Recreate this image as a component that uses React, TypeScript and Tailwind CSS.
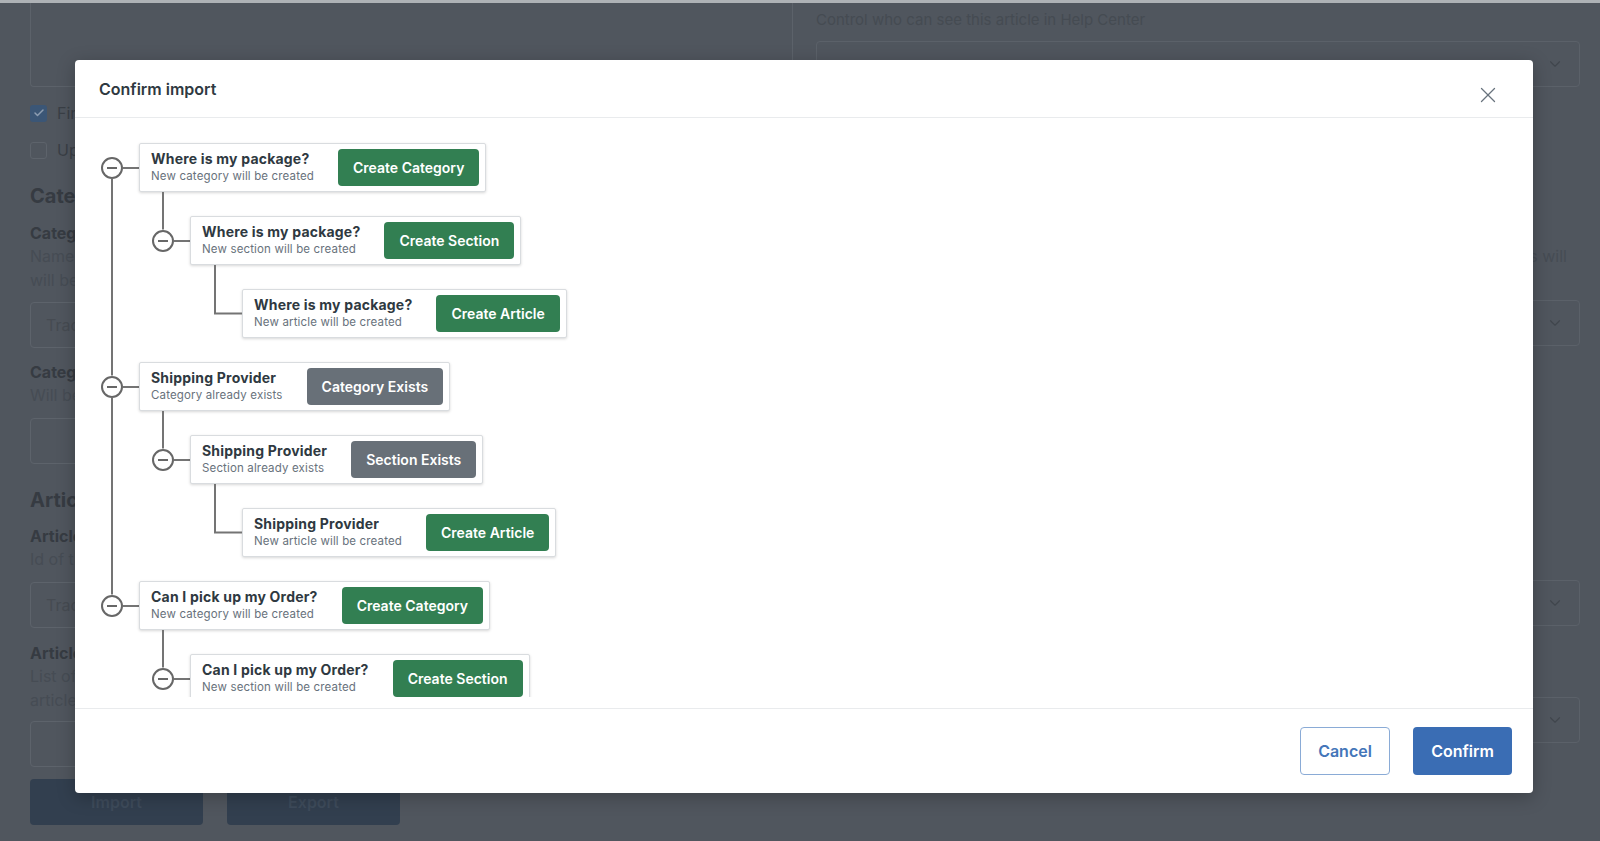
import React from 'react';
import { X, ChevronDown, Check } from 'lucide-react';

type TreeNode = {
  title: string;
  sub: string;
  action: string;
  kind: 'create' | 'exists';
  level: 0 | 1 | 2;
};

const nodes: TreeNode[] = [
  { title: 'Where is my package?', sub: 'New category will be created', action: 'Create Category', kind: 'create', level: 0 },
  { title: 'Where is my package?', sub: 'New section will be created', action: 'Create Section', kind: 'create', level: 1 },
  { title: 'Where is my package?', sub: 'New article will be created', action: 'Create Article', kind: 'create', level: 2 },
  { title: 'Shipping Provider', sub: 'Category already exists', action: 'Category Exists', kind: 'exists', level: 0 },
  { title: 'Shipping Provider', sub: 'Section already exists', action: 'Section Exists', kind: 'exists', level: 1 },
  { title: 'Shipping Provider', sub: 'New article will be created', action: 'Create Article', kind: 'create', level: 2 },
  { title: 'Can I pick up my Order?', sub: 'New category will be created', action: 'Create Category', kind: 'create', level: 0 },
  { title: 'Can I pick up my Order?', sub: 'New section will be created', action: 'Create Section', kind: 'create', level: 1 },
];

const indent = ['ml-0', 'ml-[51px]', 'ml-[103px]'];

const ROW = 73;
const cy = (i: number) => ROW * i + 24.5;
const by = (i: number) => ROW * i + 49;

function TreeLines() {
  const d = [
    `M11 ${cy(0) + 11} V${cy(3) - 11}`,
    `M11 ${cy(3) + 11} V${cy(6) - 11}`,
    `M62 ${by(0)} V${cy(1) - 11}`,
    `M114 ${by(1)} V${cy(2)} H141`,
    `M62 ${by(3)} V${cy(4) - 11}`,
    `M114 ${by(4)} V${cy(5)} H141`,
    `M62 ${by(6)} V${cy(7) - 11}`,
  ];
  return (
    <svg className="absolute left-[26px] top-0 pointer-events-none" width="200" height="600" viewBox="0 0 200 600" fill="none">
      {d.map((p, i) => (
        <path key={i} d={p} stroke="#747474" strokeWidth="2" />
      ))}
    </svg>
  );
}

function Row({ n }: { n: TreeNode }) {
  return (
    <div className={`flex items-center h-[49px] ${indent[n.level]}`}>
      {n.level < 2 ? (
        <>
          <span className="w-[22px] h-[22px] rounded-full border-2 border-[#676767] bg-white flex items-center justify-center shrink-0">
            <span className="w-[10px] h-[2px] bg-[#676767]" />
          </span>
          <span className="w-4 h-[2px] bg-[#747474] shrink-0" />
        </>
      ) : (
        <span className="w-[38px] shrink-0" />
      )}
      <div className="flex items-center gap-6 h-[49px] border border-[#d9dcdf] rounded-[2px] bg-white shadow-[0_1px_3px_rgba(0,0,0,0.16)] pl-[11px] pr-[6px] shrink-0">
        <div className="flex flex-col whitespace-nowrap -mt-[1px]">
          <span className="text-[14px] font-bold text-[#2f3941] leading-[18px] tracking-[0.2px]">{n.title}</span>
          <span className="text-[11.5px] text-[#68727c] leading-[17px] tracking-[0.15px]">{n.sub}</span>
        </div>
        <span
          className={`h-[37px] px-[15px] rounded-[4px] flex items-center text-white text-[14px] font-semibold whitespace-nowrap ${
            n.kind === 'create' ? 'bg-[#327f52]' : 'bg-[#687078]'
          }`}
        >
          {n.action}
        </span>
      </div>
    </div>
  );
}

function Modal() {
  return (
    <div className="absolute left-[75px] top-[60px] w-[1458px] h-[733px] bg-white rounded-[4px] shadow-[0_4px_18px_rgba(0,0,0,0.25)] flex flex-col overflow-hidden">
      <div className="h-[58px] shrink-0 flex items-center justify-between pl-6 pr-[32px] border-b border-[#e9ebed]">
        <h2 className="text-[16px] font-semibold text-[#2f3941]">Confirm import</h2>
        <X size={26} strokeWidth={1.2} className="text-[#68737d] mt-[12px]" />
      </div>
      <div className="h-[590px] shrink-0 flex flex-col">
        <div className="h-[579px] overflow-hidden pt-[25px]">
          <div className="relative pl-[26px] flex flex-col gap-6">
            <TreeLines />
            {nodes.map((n, i) => (
              <Row key={i} n={n} />
            ))}
          </div>
        </div>
      </div>
      <div className="flex-1 border-t border-[#e9ebed] flex items-center justify-end gap-[23px] pr-[21px]">
        <button className="w-[90px] h-[48px] border-[1.5px] border-[#8aabd6] rounded-[4px] text-[#4476b9] text-[16px] font-semibold bg-white">
          Cancel
        </button>
        <button className="w-[99px] h-[48px] bg-[#3a6db4] rounded-[4px] text-white text-[16px] font-semibold">
          Confirm
        </button>
      </div>
    </div>
  );
}

function Label({ children, cls = '' }: { children: React.ReactNode; cls?: string }) {
  return <div className={`text-[16px] font-bold text-[#363b42] leading-[22px] whitespace-nowrap ${cls}`}>{children}</div>;
}
function Desc({ children, cls = '' }: { children: React.ReactNode; cls?: string }) {
  return <div className={`text-[16px] text-[#464c54] leading-[24px] whitespace-nowrap ${cls}`}>{children}</div>;
}
function Input({ text, cls = '' }: { text?: string; cls?: string }) {
  return (
    <div className={`h-[46px] border border-[#5d636b] rounded-[4px] flex items-center pl-[15px] text-[16px] text-[#464b52] ${cls}`}>
      {text}
    </div>
  );
}
function Select({ cls = '' }: { cls?: string }) {
  return (
    <div className={`h-[46px] border border-[#5b6169] rounded-[4px] flex items-center justify-end pr-[15px] ${cls}`}>
      <ChevronDown size={18} strokeWidth={1.5} className="text-[#40464d]" />
    </div>
  );
}

function LeftCol() {
  return (
    <div className="flex flex-col">
      <div className="h-[84px] border border-t-0 border-[#5c626a] rounded-b-[4px]" />
      <div className="mt-[17px] flex items-center gap-[10px] h-[18px]">
        <span className="w-[17px] h-[17px] rounded-[3px] bg-[#3b5676] flex items-center justify-center">
          <Check size={12} strokeWidth={3} className="text-[#8d9db1]" />
        </span>
        <span className="text-[16px] text-[#3a3f46]">First row is a header</span>
      </div>
      <div className="mt-[19px] flex items-center gap-[10px] h-[18px]">
        <span className="w-[17px] h-[17px] rounded-[3px] border border-[#5d636b]" />
        <span className="text-[16px] text-[#3a3f46]">Update existing articles</span>
      </div>
      <div className="mt-[25px] text-[20px] font-bold leading-[24px] text-[#363b42]">Categories</div>
      <Label cls="mt-[14px]">Category name column</Label>
      <Desc>Name of the column that holds the category title. If no category</Desc>
      <Desc>will be found, a new one is created.</Desc>
      <Input text="Tracking" cls="mt-[10px]" />
      <Label cls="mt-[13px]">Category description column</Label>
      <Desc>Will be used as the description of the category.</Desc>
      <Input cls="mt-[11px]" />
      <div className="mt-[24px] text-[20px] font-bold leading-[24px] text-[#363b42]">Articles</div>
      <Label cls="mt-[13px]">Article id column</Label>
      <Desc>Id of the article that will be updated.</Desc>
      <Input text="Tracking id" cls="mt-[11px]" />
      <Label cls="mt-[14px]">Article labels column</Label>
      <Desc>List of labels, separated by commas, that will be added to the</Desc>
      <Desc>articles.</Desc>
      <Input cls="mt-[9px]" />
      <div className="mt-[12px] flex gap-6">
        <div className="w-[173px] h-[46px] rounded-[4px] bg-[#323f4f] flex items-center justify-center text-[16px] font-semibold text-[#3e4b5b]">
          Import
        </div>
        <div className="w-[173px] h-[46px] rounded-[4px] bg-[#323f4f] flex items-center justify-center text-[16px] font-semibold text-[#3e4b5b]">
          Export
        </div>
      </div>
    </div>
  );
}

function RightCol() {
  return (
    <div className="flex flex-col">
      <div className="mt-[6px] text-[15px] leading-[22px] text-[#454b52]">Control who can see this article in Help Center</div>
      <Select cls="mt-[10px]" />
      <Label cls="mt-[135px]">Section name column</Label>
      <Desc cls="text-right pr-[13px]">Name of the section in which the imported articles will</Desc>
      <Desc>be placed.</Desc>
      <Select cls="mt-[8px]" />
      <Label cls="mt-[179px]">Article author</Label>
      <Desc>The author of the imported articles.</Desc>
      <Select cls="mt-[9px]" />
      <Label cls="mt-[23px]">Permission group</Label>
      <Desc>Who can edit the articles.</Desc>
      <Select cls="mt-[2px]" />
    </div>
  );
}

export default function App() {
  return (
    <div className="relative w-[1600px] h-[841px] overflow-hidden bg-[#50565e] font-[Inter,'Noto_Sans',sans-serif]">
      <div className="h-[3px] bg-[#aeb2b6]" />
      <div className="grid grid-cols-[763px_764px] gap-[23px] pl-[30px]">
        <LeftCol />
        <RightCol />
      </div>
      <Modal />
    </div>
  );
}
